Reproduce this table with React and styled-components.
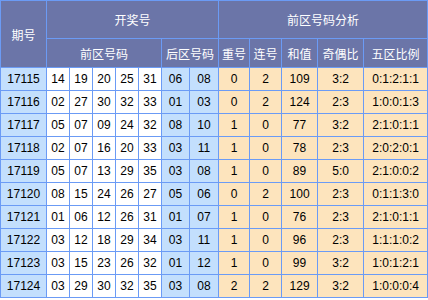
import React from 'react';
import styled, { createGlobalStyle } from 'styled-components';

const GlobalStyle = createGlobalStyle`
  html, body {
    margin: 0;
    padding: 0;
    background: #fff;
  }
`;

const rows = [
    ['17115', ['14', '19', '20', '25', '31'], ['06', '08'], '0', '2', '109', '3:2', '0:1:2:1:1'],
    ['17116', ['02', '27', '30', '32', '33'], ['01', '03'], '0', '2', '124', '2:3', '1:0:0:1:3'],
    ['17117', ['05', '07', '09', '24', '32'], ['08', '10'], '1', '0', '77', '3:2', '2:1:0:1:1'],
    ['17118', ['02', '07', '16', '20', '33'], ['03', '11'], '1', '0', '78', '2:3', '2:0:2:0:1'],
    ['17119', ['05', '07', '13', '29', '35'], ['03', '08'], '1', '0', '89', '5:0', '2:1:0:0:2'],
    ['17120', ['08', '15', '24', '26', '27'], ['05', '06'], '0', '2', '100', '2:3', '0:1:1:3:0'],
    ['17121', ['01', '06', '12', '26', '31'], ['01', '07'], '1', '0', '76', '2:3', '2:1:0:1:1'],
    ['17122', ['03', '12', '18', '29', '34'], ['03', '11'], '1', '0', '96', '2:3', '1:1:1:0:2'],
    ['17123', ['03', '15', '23', '26', '32'], ['01', '12'], '1', '0', '99', '3:2', '1:0:1:2:1'],
    ['17124', ['03', '29', '30', '32', '35'], ['03', '08'], '2', '2', '129', '3:2', '1:0:0:0:4'],
];

const widths = [46, 23, 23, 23, 23, 23, 28, 29, 31, 32, 36, 46, 64];

const Table = styled.table`
  border-collapse: collapse;
  table-layout: fixed;
  width: 428px;
  font-family: "Liberation Sans", Arial, "Noto Sans CJK SC", sans-serif;
  font-size: 12px;
  color: #000;
`;

const Col = styled.col`
  width: ${p => p.$w}px;
`;

const Th = styled.th`
  border: 1px solid #6b9bf5;
  background: #6b75a8;
  color: #fff;
  font-weight: normal;
  font-family: "Noto Sans CJK SC", sans-serif;
  font-size: 12px;
  padding: 0;
  text-align: center;
  height: ${p => p.$h}px;
`;

const bgs = {
    blue: '#c3dffd',
    white: '#fff',
    wheat: '#fde4bd',
};

const Td = styled.td`
  border: 1px solid #6b9bf5;
  background: ${p => bgs[p.$tone]};
  padding: 0;
  height: 22px;
  text-align: center;
  white-space: nowrap;
  overflow: hidden;
`;

export default function App() {
    return (
        <>
            <GlobalStyle />
            <Table>
                <colgroup>
                    {widths.map((w, i) => <Col key={i} $w={w} />)}
                </colgroup>
                <thead>
                    <tr>
                        <Th rowSpan={2}>期号</Th>
                        <Th colSpan={7} $h={37}>开奖号</Th>
                        <Th colSpan={5}>前区号码分析</Th>
                    </tr>
                    <tr>
                        <Th colSpan={5} $h={28}>前区号码</Th>
                        <Th colSpan={2}>后区号码</Th>
                        <Th>重号</Th>
                        <Th>连号</Th>
                        <Th>和值</Th>
                        <Th>奇偶比</Th>
                        <Th>五区比例</Th>
                    </tr>
                </thead>
                <tbody>
                    {rows.map(([issue, front, back, rep, cons, sum, odd, zone]) => (
                        <tr key={issue}>
                            <Td $tone="blue">{issue}</Td>
                            {front.map((n, i) => <Td key={'f' + i} $tone="white">{n}</Td>)}
                            {back.map((n, i) => <Td key={'b' + i} $tone="blue">{n}</Td>)}
                            <Td $tone="wheat">{rep}</Td>
                            <Td $tone="wheat">{cons}</Td>
                            <Td $tone="wheat">{sum}</Td>
                            <Td $tone="wheat">{odd}</Td>
                            <Td $tone="wheat">{zone}</Td>
                        </tr>
                    ))}
                </tbody>
            </Table>
        </>
    );
}
